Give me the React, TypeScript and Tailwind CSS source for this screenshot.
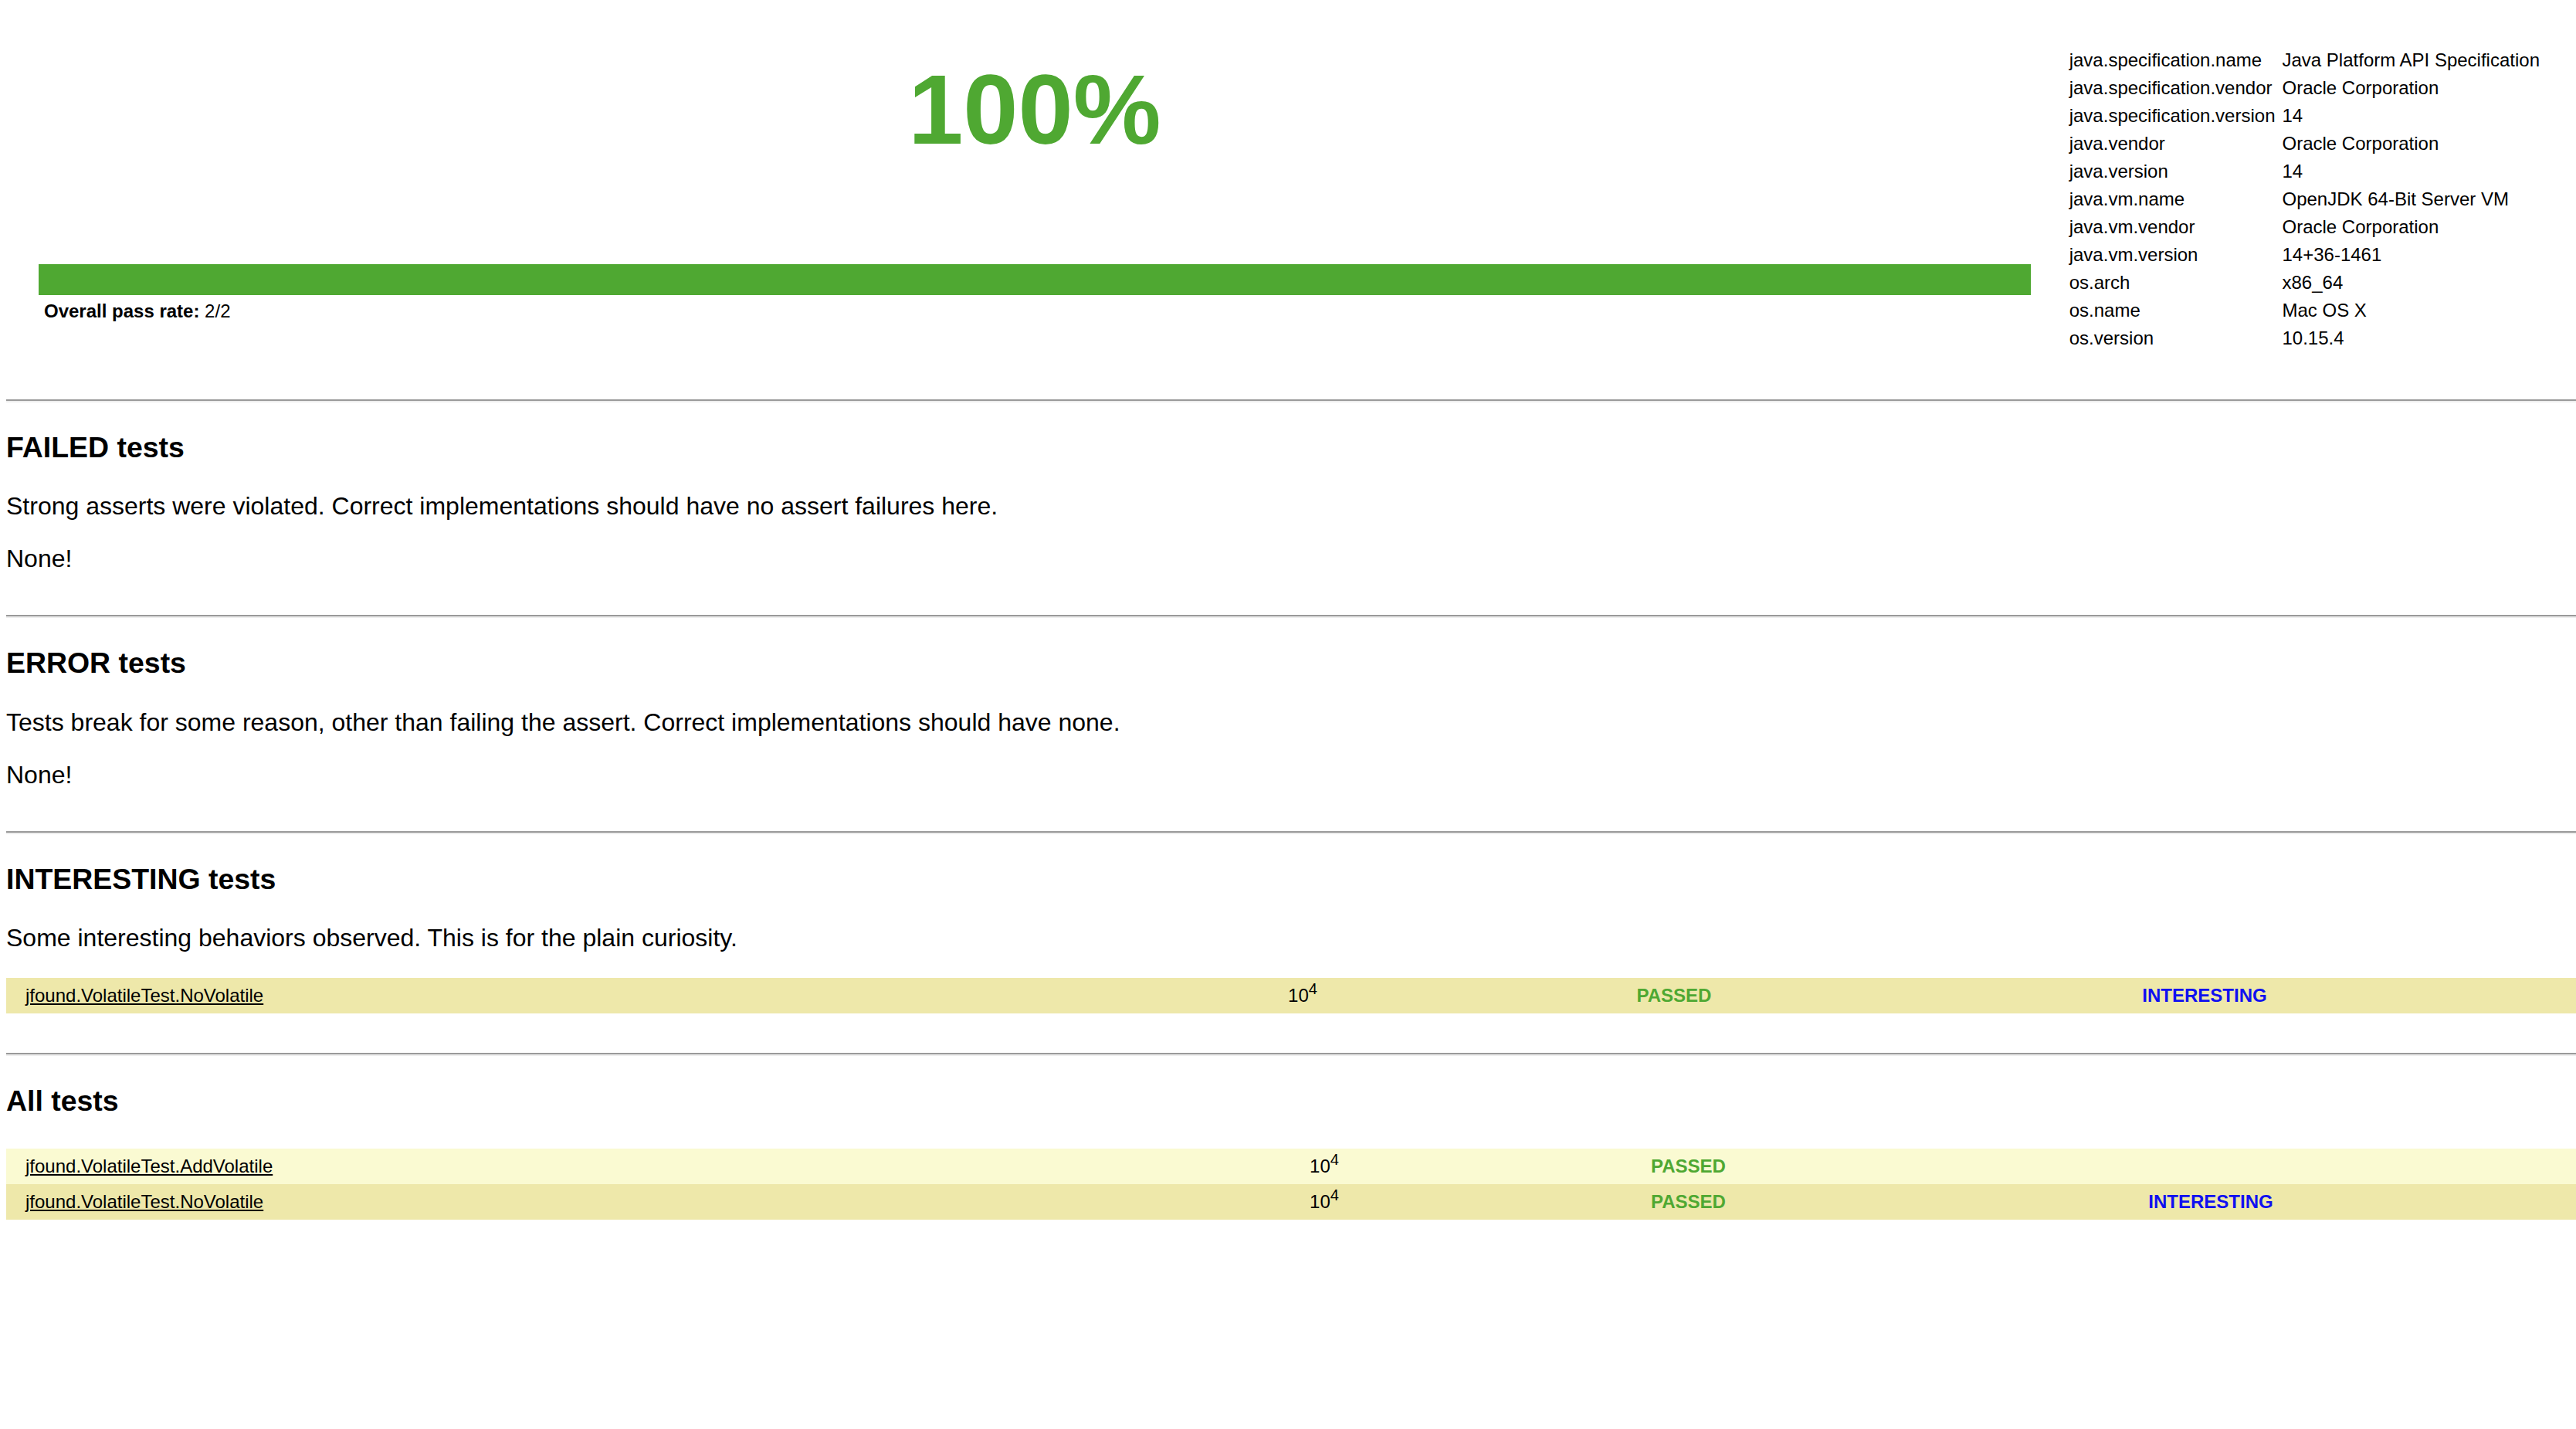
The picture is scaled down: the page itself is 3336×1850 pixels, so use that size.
const ENV: [string, string][] = [
  ["java.specification.name", "Java Platform API Specification"],
  ["java.specification.vendor", "Oracle Corporation"],
  ["java.specification.version", "14"],
  ["java.vendor", "Oracle Corporation"],
  ["java.version", "14"],
  ["java.vm.name", "OpenJDK 64-Bit Server VM"],
  ["java.vm.vendor", "Oracle Corporation"],
  ["java.vm.version", "14+36-1461"],
  ["os.arch", "x86_64"],
  ["os.name", "Mac OS X"],
  ["os.version", "10.15.4"],
]

type Test = { name: string; interesting: boolean }

const ALL_TESTS: Test[] = [
  { name: "jfound.VolatileTest.AddVolatile", interesting: false },
  { name: "jfound.VolatileTest.NoVolatile", interesting: true },
]

function Rule() {
  return <div className="h-[4px] border-t-2 border-b-2 border-t-[#9a9a9a] border-b-[#eeeeee]" />
}

function Heading({ children }: { children: React.ReactNode }) {
  return <h3 className="mt-[37px] text-[37.44px] font-bold leading-[43px]">{children}</h3>
}

function Para({ children, className = "" }: { children: React.ReactNode; className?: string }) {
  return <p className={"text-[32px] leading-[37px] " + className}>{children}</p>
}

function TestRow({ test, cols, light }: { test: Test; cols: string; light?: boolean }) {
  return (
    <div className={"grid h-[46px] items-center text-[24px] " + cols + (light ? " bg-[#fafad2]" : " bg-[#eee8aa]")}>
      <div className="pl-[25px]">
        <a href="#" className="underline underline-offset-2">
          {test.name}
        </a>
      </div>
      <div className="text-center">
        10<sup className="text-[20px]">4</sup>
      </div>
      <div className="text-center font-bold text-[#4fa832]">PASSED</div>
      <div className="text-center font-bold text-[#1010f0]">{test.interesting ? "INTERESTING" : ""}</div>
      <div />
    </div>
  )
}

export default function App() {
  return (
    <div className="min-h-[1850px] w-full bg-white pl-[8px] text-black font-['Liberation_Sans',Arial,sans-serif]">
      {/* summary + environment */}
      <div className="flex items-start pl-[42px]">
        <div className="flex-1 pt-[78px]">
          <div className="text-center text-[128px] font-bold leading-none text-[#4fa832]">100%</div>
          <div className="mt-[136px] h-[40px] bg-[#4fa832]" />
          <div className="mt-[7px] pl-[7px] text-[24px] leading-[28px]">
            <b>Overall pass rate:</b> 2/2
          </div>
        </div>
        <div className="ml-[50px] pr-[47px] pt-[60px]">
          <div className="grid grid-cols-[auto_auto] gap-x-[9px] text-[24px]">
            {ENV.map(([k, v]) => (
              <div key={k} className="contents">
                <div className="flex h-[36px] items-center">{k}</div>
                <div className="flex h-[36px] items-center">{v}</div>
              </div>
            ))}
          </div>
        </div>
      </div>

      <div className="mt-[61px]">
        <Rule />
      </div>
      <Heading>FAILED tests</Heading>
      <Para className="mt-[36px]">Strong asserts were violated. Correct implementations should have no assert failures here.</Para>
      <Para className="mt-[31px]">None!</Para>

      <div className="mt-[54px]">
        <Rule />
      </div>
      <Heading>ERROR tests</Heading>
      <Para className="mt-[37px]">Tests break for some reason, other than failing the assert. Correct implementations should have none.</Para>
      <Para className="mt-[31px]">None!</Para>

      <div className="mt-[54px]">
        <Rule />
      </div>
      <Heading>INTERESTING tests</Heading>
      <Para className="mt-[36px]">Some interesting behaviors observed. This is for the plain curiosity.</Para>
      <div className="mt-[33px]">
        <TestRow test={ALL_TESTS[1]} cols="grid-cols-[1479px_400px_562px_812px_1fr]" />
      </div>

      <div className="mt-[51px]">
        <Rule />
      </div>
      <Heading>All tests</Heading>
      <div className="mt-[40px]">
        {ALL_TESTS.map((t, i) => (
          <TestRow key={t.name} test={t} light={i % 2 === 0} cols="grid-cols-[1507px_400px_543px_810px_1fr]" />
        ))}
      </div>
    </div>
  )
}
